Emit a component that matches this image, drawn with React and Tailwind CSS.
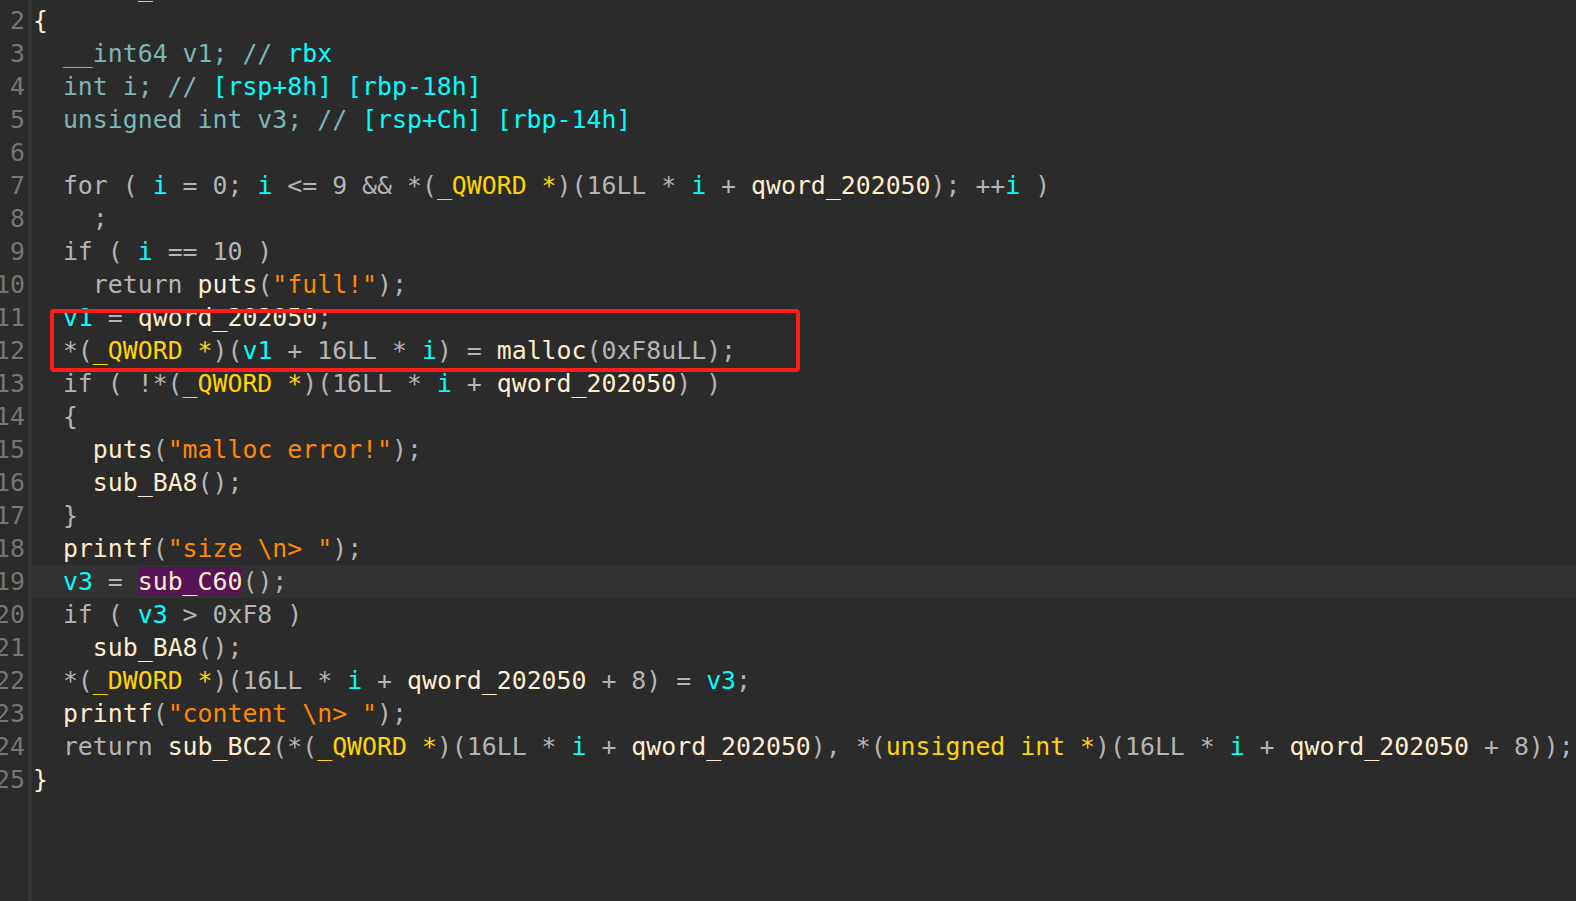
import React from "react";

// token colours, IDA dark theme
const C = {
    p: "text-[#b4b4b4]", // keywords, punctuation, numbers
    d: "text-[#7cb6b6]", // local declarations / comments
    v: "text-[#00ffff]", // variables, register notes
    t: "text-[#ffd400]", // types in casts
    s: "text-[#ff8a00]", // strings
    f: "text-[#ffedce]", // names (functions, globals)
};

const lines = [
    [["       ", "p"], ["_", "t"], ["   ();", "p"]],
    [["{", "f"]],
    [["  __int64 v1; // ", "d"], ["rbx", "v"]],
    [["  int i; // ", "d"], ["[rsp+8h] [rbp-18h]", "v"]],
    [["  unsigned int v3; // ", "d"], ["[rsp+Ch] [rbp-14h]", "v"]],
    [],
    [["  for ( ", "p"], ["i", "v"], [" = 0; ", "p"], ["i", "v"], [" <= 9 && *(", "p"], ["_QWORD *", "t"], [")(16LL * ", "p"], ["i", "v"], [" + ", "p"], ["qword_202050", "f"], ["); ++", "p"], ["i", "v"], [" )", "p"]],
    [["    ;", "p"]],
    [["  if ( ", "p"], ["i", "v"], [" == 10 )", "p"]],
    [["    return ", "p"], ["puts", "f"], ["(", "p"], ["\"full!\"", "s"], [");", "p"]],
    [["  ", "p"], ["v1", "v"], [" = ", "p"], ["qword_202050", "f"], [";", "p"]],
    [["  *(", "p"], ["_QWORD *", "t"], [")(", "p"], ["v1", "v"], [" + 16LL * ", "p"], ["i", "v"], [") = ", "p"], ["malloc", "f"], ["(0xF8uLL);", "p"]],
    [["  if ( !*(", "p"], ["_QWORD *", "t"], [")(16LL * ", "p"], ["i", "v"], [" + ", "p"], ["qword_202050", "f"], [") )", "p"]],
    [["  {", "p"]],
    [["    ", "p"], ["puts", "f"], ["(", "p"], ["\"malloc error!\"", "s"], [");", "p"]],
    [["    ", "p"], ["sub_BA8", "f"], ["();", "p"]],
    [["  }", "p"]],
    [["  ", "p"], ["printf", "f"], ["(", "p"], ["\"size \\n> \"", "s"], [");", "p"]],
    [["  ", "p"], ["v3", "v"], [" = ", "p"], ["sub_C60", "hl"], ["();", "p"]],
    [["  if ( ", "p"], ["v3", "v"], [" > 0xF8 )", "p"]],
    [["    ", "p"], ["sub_BA8", "f"], ["();", "p"]],
    [["  *(", "p"], ["_DWORD *", "t"], [")(16LL * ", "p"], ["i", "v"], [" + ", "p"], ["qword_202050", "f"], [" + 8) = ", "p"], ["v3", "v"], [";", "p"]],
    [["  ", "p"], ["printf", "f"], ["(", "p"], ["\"content \\n> \"", "s"], [");", "p"]],
    [["  return ", "p"], ["sub_BC2", "f"], ["(*(", "p"], ["_QWORD *", "t"], [")(16LL * ", "p"], ["i", "v"], [" + ", "p"], ["qword_202050", "f"], ["), *(", "p"], ["unsigned int *", "t"], [")(16LL * ", "p"], ["i", "v"], [" + ", "p"], ["qword_202050", "f"], [" + 8));", "p"]],
    [["}", "f"]],
];

const Token = ({ text, kind }) => {
    if (kind === "hl") {
        return <span className="bg-[#561456] text-[#ffedce]">{text}</span>;
    }
    return <span className={C[kind]}>{text}</span>;
};

export default function App() {
    return (
        <div className="relative w-[1576px] h-[901px] overflow-hidden bg-[#2b2b2b] font-['DejaVu_Sans_Mono',monospace] text-[24.85px] leading-[33px]">
            <div className="flex min-h-full -mt-[29px]">
                {/* gutter */}
                <div className="w-[28px] shrink-0 text-right pr-[3px] text-[#767676] whitespace-nowrap">
                    {lines.map((_, n) => (
                        <div key={n} className="h-[33px] flex justify-end">{n + 1}</div>
                    ))}
                </div>
                <div className="w-[4px] shrink-0 bg-[#353535] min-h-[960px]" />
                {/* code */}
                <div className="flex-1 whitespace-pre">
                    {lines.map((line, n) => (
                        <div key={n} className={`h-[33px] pl-px ${n === 18 ? "bg-[#323232]" : ""}`}>
                            {line.map(([text, kind], j) => (
                                <Token key={j} text={text} kind={kind} />
                            ))}
                        </div>
                    ))}
                </div>
            </div>
            {/* red annotation box */}
            <div className="absolute left-[50px] top-[309px] w-[750px] h-[63px] border-[4px] border-[#ff1c1c] rounded-[4px]" />
        </div>
    );
}
